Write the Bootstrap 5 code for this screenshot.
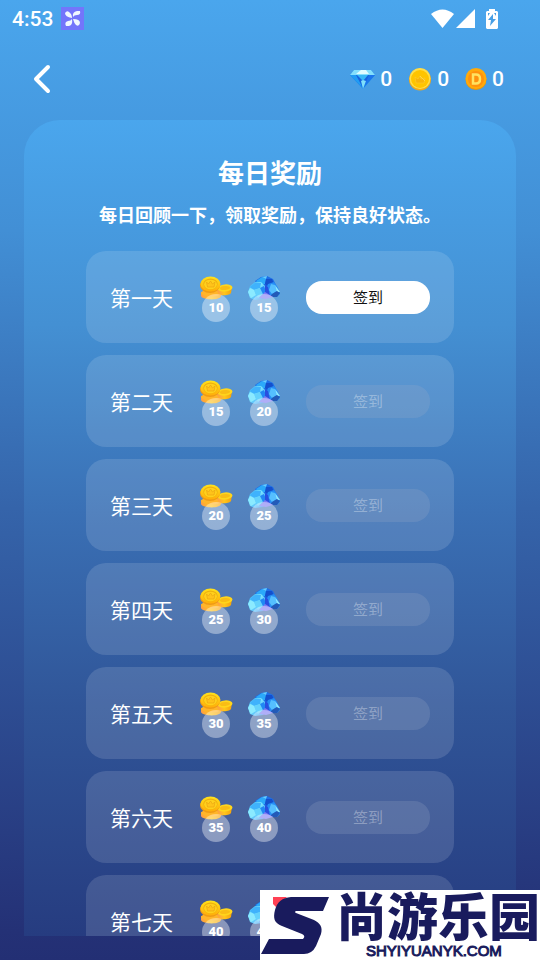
<!DOCTYPE html>
<html lang="zh-CN">
<head>
<meta charset="utf-8">
<meta name="viewport" content="width=device-width, initial-scale=1">
<title>每日奖励</title>
<link href="https://cdn.jsdelivr.net/npm/bootstrap@5.3.0/dist/css/bootstrap.min.css" rel="stylesheet">
<style>
body { font-family: Roboto, "Noto Sans CJK SC", sans-serif; background: #232f74; }
.screen { background: linear-gradient(#4aa6ed 0%, #428fd5 24%, #3564aa 53%, #243176 97%, #232f74 100%); padding-bottom: 24px; }
.status { height: 37px; padding: 0 42px 0 12px; font-size: 21px; font-weight: 500; line-height: 36px; }
.signals { gap: 2px; }
.battery { margin-left: 9px; }
.topbar { height: 83px; padding: 0 36px 0 32px; }
.back { line-height: 0; }
.purse { font-size: 21px; font-weight: 500; line-height: 28px; gap: 16px; }
.purse-item { gap: 5px; }
.panel { margin: 0 24px; padding: 36px 62px 0; border-radius: 36px 36px 0 0; min-height: 0; background: linear-gradient(#4aa6ed 0%, #4490d3 25%, #3a70b5 48%, #305598 72%, #263c80 100%); }
.title { font-size: 26px; line-height: 36px; font-weight: 700; margin-bottom: 10px; }
.subtitle { font-size: 18px; line-height: 28px; font-weight: 700; margin: 0 -20px 21px; white-space: nowrap; }
.days { gap: 12px; }
.day { height: 92px; padding: 3px 24px 0; border-radius: 20px; background: rgba(255,255,255,.13); }
.day-name { font-size: 21px; line-height: 32px; width: 64px; margin-right: 25px; white-space: nowrap; }
.rewards { gap: 14px; }
.reward { width: 34px; height: 46px; }
.pill { left: 3px; top: 18px; width: 28px; height: 28px; font-size: 13px; font-weight: 900; line-height: 28px; background: rgba(255,255,255,.38); }
.check { width: 124px; height: 33px; margin-bottom: 3px; padding: 1px 0 0; border: 0; border-radius: 16px; font-size: 15px; line-height: 32px; }
.check, .check:hover { background: #fff; color: #111; }
.check:disabled { background: rgba(160,175,200,.22); color: rgba(255,255,255,.32); opacity: 1; }
.brand { width: 280px; height: 70px; right: 0; bottom: 0; color: #191b5d; }
.brand-text { left: 76px; top: -1px; font-family: "Noto Sans CJK SC", sans-serif; font-size: 51px; line-height: 51px; font-weight: 900; white-space: nowrap; }
.brand-url { left: 106px; top: 52px; font-family: "Liberation Sans", sans-serif; font-size: 15px; line-height: 18px; -webkit-text-stroke: 1px #191b5d; }
</style>
<script src="https://cdn.jsdelivr.net/npm/bootstrap@5.3.0/dist/js/bootstrap.bundle.min.js"></script>
</head>
<body>
<svg width="0" height="0" class="position-absolute" aria-hidden="true">
  <defs>
    <linearGradient id="gold" x1="0" y1="0" x2="0" y2="1"><stop offset="0" stop-color="#ffe21c"/><stop offset="1" stop-color="#ffad0a"/></linearGradient>
    <linearGradient id="amber" x1="0" y1="0" x2="1" y2="0"><stop offset="0" stop-color="#ff9b45"/><stop offset=".5" stop-color="#ffc51c"/><stop offset="1" stop-color="#f5a20b"/></linearGradient>
    <linearGradient id="ice" x1="0" y1="0" x2="1" y2="1"><stop offset="0" stop-color="#239cf4"/><stop offset=".4" stop-color="#79e4ff"/><stop offset="1" stop-color="#2887f2"/></linearGradient>
    <symbol id="coins" viewBox="0 0 34 24">
      <path d="M2 16v4c1 4 19 5 20 0v-4z" fill="url(#amber)"/>
      <ellipse cx="12" cy="17" rx="10" ry="3.5" fill="#ffb52a"/>
      <path d="M18 14l2 5c4 1 11 0 12-2l1-6z" fill="url(#amber)"/>
      <ellipse cx="26" cy="12" rx="7.5" ry="3.6" fill="#ffd51c" transform="rotate(-5 26 12)"/>
      <ellipse cx="26" cy="12" rx="5" ry="2" fill="#f9bd15" transform="rotate(-5 26 12)"/>
      <ellipse cx="11" cy="9.500" rx="10" ry="7.500" fill="#ef9b15"/>
      <ellipse cx="11.500" cy="8" rx="10" ry="7.5" fill="url(#gold)"/>
      <ellipse cx="11.500" cy="8" rx="7.2" ry="5.5" fill="#eeb10f"/>
      <ellipse cx="11.500" cy="8.500" rx="6.4" ry="4.8" fill="#ffd01c"/>
      <path d="M7.500 6l2 2 2-3 2 3 2.500-2-1 5h-6.500z" fill="#ffc31a" stroke="#e8a112" stroke-width=".6"/>
    </symbol>
    <symbol id="gems" viewBox="0 0 34 24">
      <path d="M8 5l6-4 6-1 6 3 3 6-9 6-9-5z" fill="#1c6ee8"/>
      <path d="M9 5l6-4 4 2-1 5-6 1z" fill="#2ba9fa"/>
      <path d="M15 1l5-1-1 3z" fill="#65cdff"/>
      <path d="M19 3l6 0 2 5-6 3-3-3z" fill="#1450cd"/>
      <path d="M21 8l6-2 3 4 3 6v2l-3 3-8-1-4-5z" fill="#268ef5"/>
      <path d="M24 8l4 1 2 6-5 3-3-4z" fill="#55bfff"/>
      <path d="M28 9l5 7-3 0z" fill="#91e9ff"/>
      <path d="M25 18l5-3 3 2-3 4-7 0z" fill="#235ab8"/>
      <path d="M1 16l2-6 5-4 6 0 5 5 1 7-4 5-8 1-5-2z" fill="url(#ice)"/>
      <path d="M3 11l5-4 6 0-1 5-6 2z" fill="#3fb2fc"/>
      <path d="M1 16l2-4 4 2 2 5-5 3z" fill="#8beaff"/>
      <path d="M7 14l6-2 3 6-5 4-2-3z" fill="#65d2fc"/>
      <path d="M13 12l4-2 3 8-4 0z" fill="#2187f5"/>
      <path d="M18 9l3 2 2 9-5 1z" fill="#294fdf"/>
      <path d="M12 22l6-6 8 5-7 2z" fill="#7e7cf4"/>
    </symbol>
  </defs>
</svg>
<div class="screen vh-100 d-flex flex-column text-white position-relative overflow-hidden">
  <div class="status d-flex align-items-center flex-shrink-0">
    <span>4:53</span>
    <svg class="ms-2" width="23" height="23" viewBox="0 0 23 23" aria-hidden="true"><path fill="#7375fb" d="M0 0h23v23H0z"/><g fill="#f0f8ff"><path d="M11 11Q4 10 4 6Q6 3 8 5Q11 7 11 11z"/><path d="M12 10Q11 5 16 4L19 4Q20 8 16 8Q13 8 12 10z"/><path d="M12 12Q19 12 19 16Q18 20 15 18Q13 16 12 12z"/><path d="M11 12Q12 18 8 19L5 19Q3 15 7 14Q10 14 11 12z"/></g></svg>
    <div class="signals d-flex align-items-center ms-auto">
      <svg width="23" height="20" viewBox="0 0 23 20" aria-hidden="true"><path fill="#fff" d="M0 5Q11.500-4 23 5L11.500 19z"/></svg>
      <svg width="19" height="20" viewBox="0 0 19 20" aria-hidden="true"><path fill="#fff" d="M0 19L19 0v19z"/></svg>
      <svg class="battery" width="12" height="20" viewBox="0 0 12 20" aria-hidden="true"><path fill="#fff" d="M3 0h6v2h2l1 1v16l-1 1H1l-1-1V3l1-1h2z"/><path fill="#489fe5" d="M7 5L2 11h3l-1 6 6-7H7zM2 4h2L2 7zM8 4h2v3z"/></svg>
    </div>
  </div>
  <header class="topbar d-flex align-items-center justify-content-between flex-shrink-0">
    <button class="back btn border-0 p-0" type="button" aria-label="返回"><svg width="20" height="32" viewBox="0 0 20 32" fill="none" stroke="#fff" stroke-width="4" stroke-linecap="round" stroke-linejoin="round"><path d="M16 4L4 16l12 12"/></svg></button>
    <div class="purse d-flex">
      <div class="purse-item d-flex align-items-center"><svg width="25" height="20" viewBox="0 0 25 20" aria-hidden="true"><path d="M4 1h17l4 5-12 14L0 6z" fill="#1687ec"/><path d="M4 1h17l4 5H0z" fill="#83dffc"/><path d="M6 5l5-4h5l3 4z" fill="#dffcff"/><path d="M0 6h7l5 12z" fill="#219cf4"/><path d="M18 6h7L13 19z" fill="#1b75ec"/><path d="M6 6h13l-6 13z" fill="#1763de"/><path d="M7 6h11l-5 6z" fill="#36b8f7"/><path d="M11 12l2-1 3 1-3 8z" fill="#7edffb"/></svg><span>0</span></div>
      <div class="purse-item d-flex align-items-center"><svg width="24" height="24" viewBox="0 0 24 24" aria-hidden="true"><circle cx="12" cy="12.500" r="11" fill="#f2aa18"/><circle cx="12" cy="11.500" r="10.500" fill="#ffdf4b"/><circle cx="12" cy="12" r="9" fill="#ffc400"/><path d="M7 10l3 2 2-3 1 3 4-1-1 5H8z" fill="#f8b50a" stroke="#ffcf3a" stroke-width=".5"/><path d="M12 9l5 5" stroke="#ffdc52" stroke-width=".8"/></svg><span>0</span></div>
      <div class="purse-item d-flex align-items-center"><svg width="22" height="24" viewBox="0 0 22 24" aria-hidden="true"><circle cx="11" cy="12.500" r="10.500" fill="#e7960c"/><circle cx="11" cy="11.500" r="10.500" fill="#ffaa0b"/><circle cx="11" cy="12" r="8" fill="#ff920e"/><path fill="none" stroke="#ffe361" stroke-width="2.500" d="M8 7.500h3q4 0 4 4.500t-4 4.500H8z"/></svg><span>0</span></div>
    </div>
  </header>
  <main class="panel flex-grow-1 overflow-hidden">
    <h1 class="title text-center">每日奖励</h1>
    <p class="subtitle text-center">每日回顾一下，领取奖励，保持良好状态。</p>
    <div class="days d-flex flex-column" id="days"></div>
  </main>
  <div class="brand position-absolute bg-white overflow-hidden">
    <svg width="72" height="70" viewBox="0 0 72 70" aria-hidden="true"><path fill="#ff4054" d="M13 7h14L16 17l-3-3z"/><path fill="#191b5d" d="M69 7H31Q18 8 15 20c-2 8-1 13 7 16l20 8q4 2 1 5H9L1 64h43q8 0 12-8l5-12c2-7-1-11-7-14l-18-7q-2-1 0-2h27z"/></svg>
    <div class="brand-text position-absolute">尚游乐园</div>
    <div class="brand-url position-absolute">SHYIYUANYK.COM</div>
  </div>
</div>
<script>
const names = ['第一天', '第二天', '第三天', '第四天', '第五天', '第六天', '第七天'];
document.getElementById('days').innerHTML = names.map((name, i) => `
  <section class="day d-flex align-items-center flex-shrink-0">
    <div class="day-name">${name}</div>
    <div class="rewards d-flex">
      <div class="reward position-relative"><svg class="d-block" width="34" height="24"><use href="#coins"/></svg><span class="pill position-absolute rounded-circle text-center">${10 + i * 5}</span></div>
      <div class="reward position-relative"><svg class="d-block" width="34" height="24"><use href="#gems"/></svg><span class="pill position-absolute rounded-circle text-center">${15 + i * 5}</span></div>
    </div>
    <button class="check btn ms-auto" type="button"${i ? ' disabled' : ''}>签到</button>
  </section>`).join('');
</script>
</body>
</html>
